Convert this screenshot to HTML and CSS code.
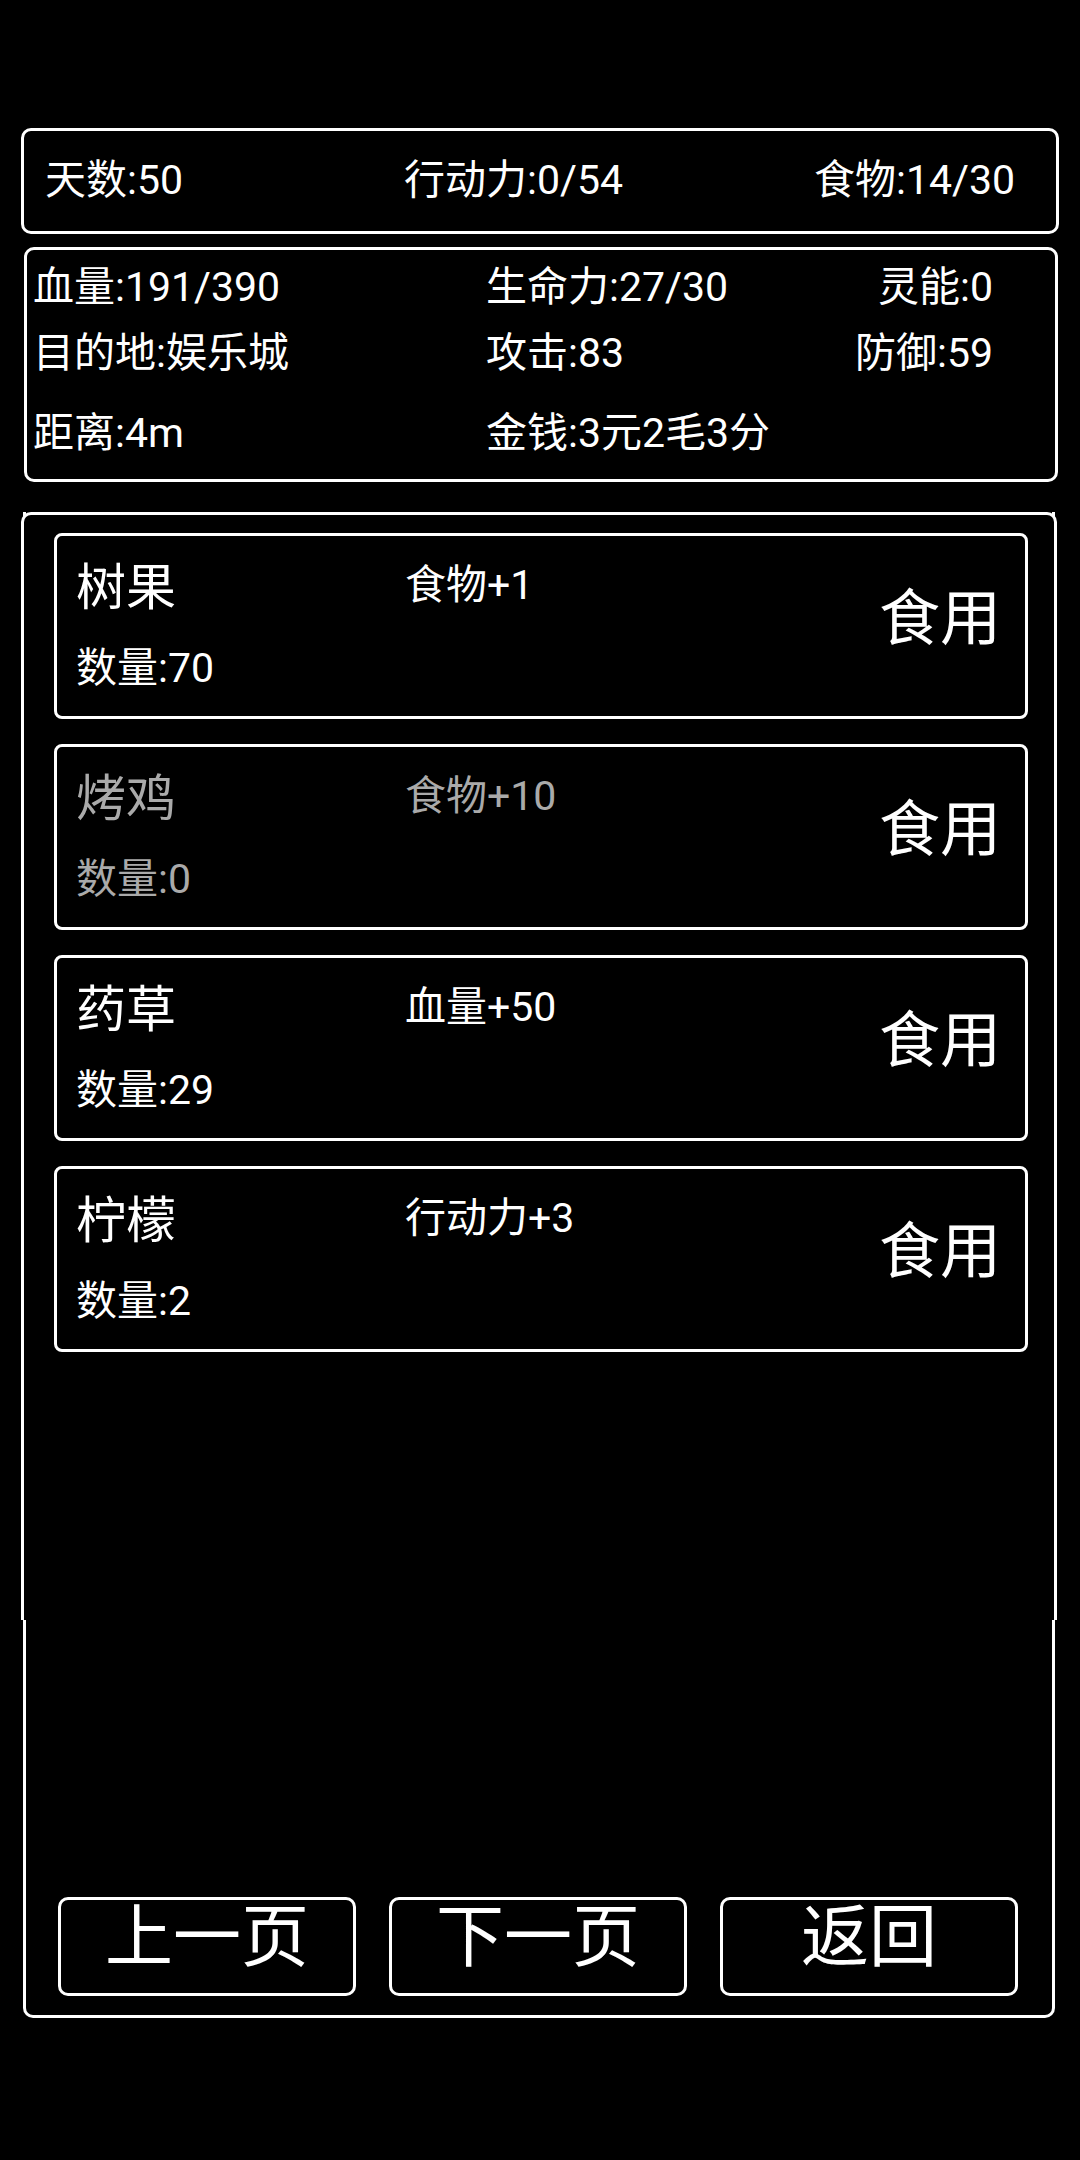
FILE: index.html
```html
<!DOCTYPE html>
<html lang="zh-CN">
<head>
	<meta charset="UTF-8">
	<title>背包</title>
	<link rel="stylesheet" href="styles.css">
</head>
<body>
	<div class="page">
		<div class="bar_top">
			<span>天数:50</span>
			<span>行动力:0/54</span>
			<span>食物:14/30</span>
		</div>
		<div class="bar_info">
			<span>血量:191/390</span>
			<span>生命力:27/30</span>
			<span class="right">灵能:0</span>
			<span>目的地:娱乐城</span>
			<span>攻击:83</span>
			<span class="right">防御:59</span>
			<span>距离:4m</span>
			<span>金钱:3元2毛3分</span>
			<span></span>
		</div>
		<div class="panel">
			<div class="list">
				<div class="card">
					<span class="name">树果</span>
					<span class="effect">食物+1</span>
					<span class="use">食用</span>
					<span class="count">数量:70</span>
				</div>
				<div class="card empty">
					<span class="name">烤鸡</span>
					<span class="effect">食物+10</span>
					<span class="use">食用</span>
					<span class="count">数量:0</span>
				</div>
				<div class="card">
					<span class="name">药草</span>
					<span class="effect">血量+50</span>
					<span class="use">食用</span>
					<span class="count">数量:29</span>
				</div>
				<div class="card">
					<span class="name">柠檬</span>
					<span class="effect">行动力+3</span>
					<span class="use">食用</span>
					<span class="count">数量:2</span>
				</div>
			</div>
			<div class="spacer"></div>
			<div class="buttons">
				<div class="btn">上一页</div>
				<div class="btn">下一页</div>
				<div class="btn">返回</div>
			</div>
		</div>
	</div>
</body>
</html>
```

FILE: styles.css
```css
* {
	box-sizing: border-box;
}
body {
	margin: 0;
	background: #000;
	color: #fff;
	font-family: Roboto, "Noto Sans CJK SC", sans-serif;
}
.page {
	width: 1080px;
	height: 2160px;
	padding-top: 128px;
}
.bar_top {
	display: grid;
	grid-template-columns: 359px 1fr auto;
	align-items: center;
	height: 106px;
	margin: 0 21px;
	padding: 0 41px 10px 21px;
	border: 3px solid #fff;
	border-radius: 10px;
	font-size: 41px;
	white-space: nowrap;
}
.bar_info {
	display: grid;
	grid-template-columns: 453px 1fr auto;
	grid-template-rows: 66px 66px 93px;
	align-items: center;
	margin: 13px 22px 0 24px;
	padding: 0 62px 4px 6px;
	border: 3px solid #fff;
	border-radius: 10px;
	font-size: 41px;
	white-space: nowrap;
}
.bar_info .right {
	text-align: right;
}
.panel {
	display: flex;
	flex-direction: column;
	height: 1506px;
	margin: 30px 25px 0 23px;
	border: 3px solid #fff;
	border-top: none;
	border-radius: 0 0 10px 10px;
}
.list {
	height: 1108px;
	margin: 0 -5px 0 -5px;
	padding: 18px 26px 0 30px;
	background: #000;
	border: 3px solid #fff;
	border-bottom: none;
	border-radius: 10px 10px 0 0;
	display: flex;
	flex-direction: column;
	gap: 25px;
}
.card {
	display: grid;
	grid-template-columns: 329px 1fr auto;
	grid-template-rows: 70px 93px;
	height: 186px;
	padding: 17px 24px 0 19px;
	border: 3px solid #fff;
	border-radius: 8px;
	font-size: 41px;
	white-space: nowrap;
}
.card .name {
	font-size: 50px;
	line-height: 70px;
}
.card .effect {
	line-height: 64px;
}
.card .use {
	grid-row: 1 / 3;
	grid-column: 3;
	align-self: start;
	margin-top: 26px;
	font-size: 61px;
	line-height: 80px;
}
.card .count {
	grid-column: 1;
	line-height: 90px;
}
.card.empty .name,
.card.empty .effect,
.card.empty .count {
	color: #aaa;
}
.spacer {
	flex: 1;
}
.buttons {
	display: grid;
	grid-template-columns: repeat(3, 298px);
	gap: 33px;
	padding: 0 0 19px 32px;
}
.btn {
	height: 99px;
	padding-bottom: 18px;
	border: 3px solid #fff;
	border-radius: 10px;
	font-size: 68px;
	line-height: 80px;
	text-align: center;
	display: flex;
	align-items: center;
	justify-content: center;
}
```
